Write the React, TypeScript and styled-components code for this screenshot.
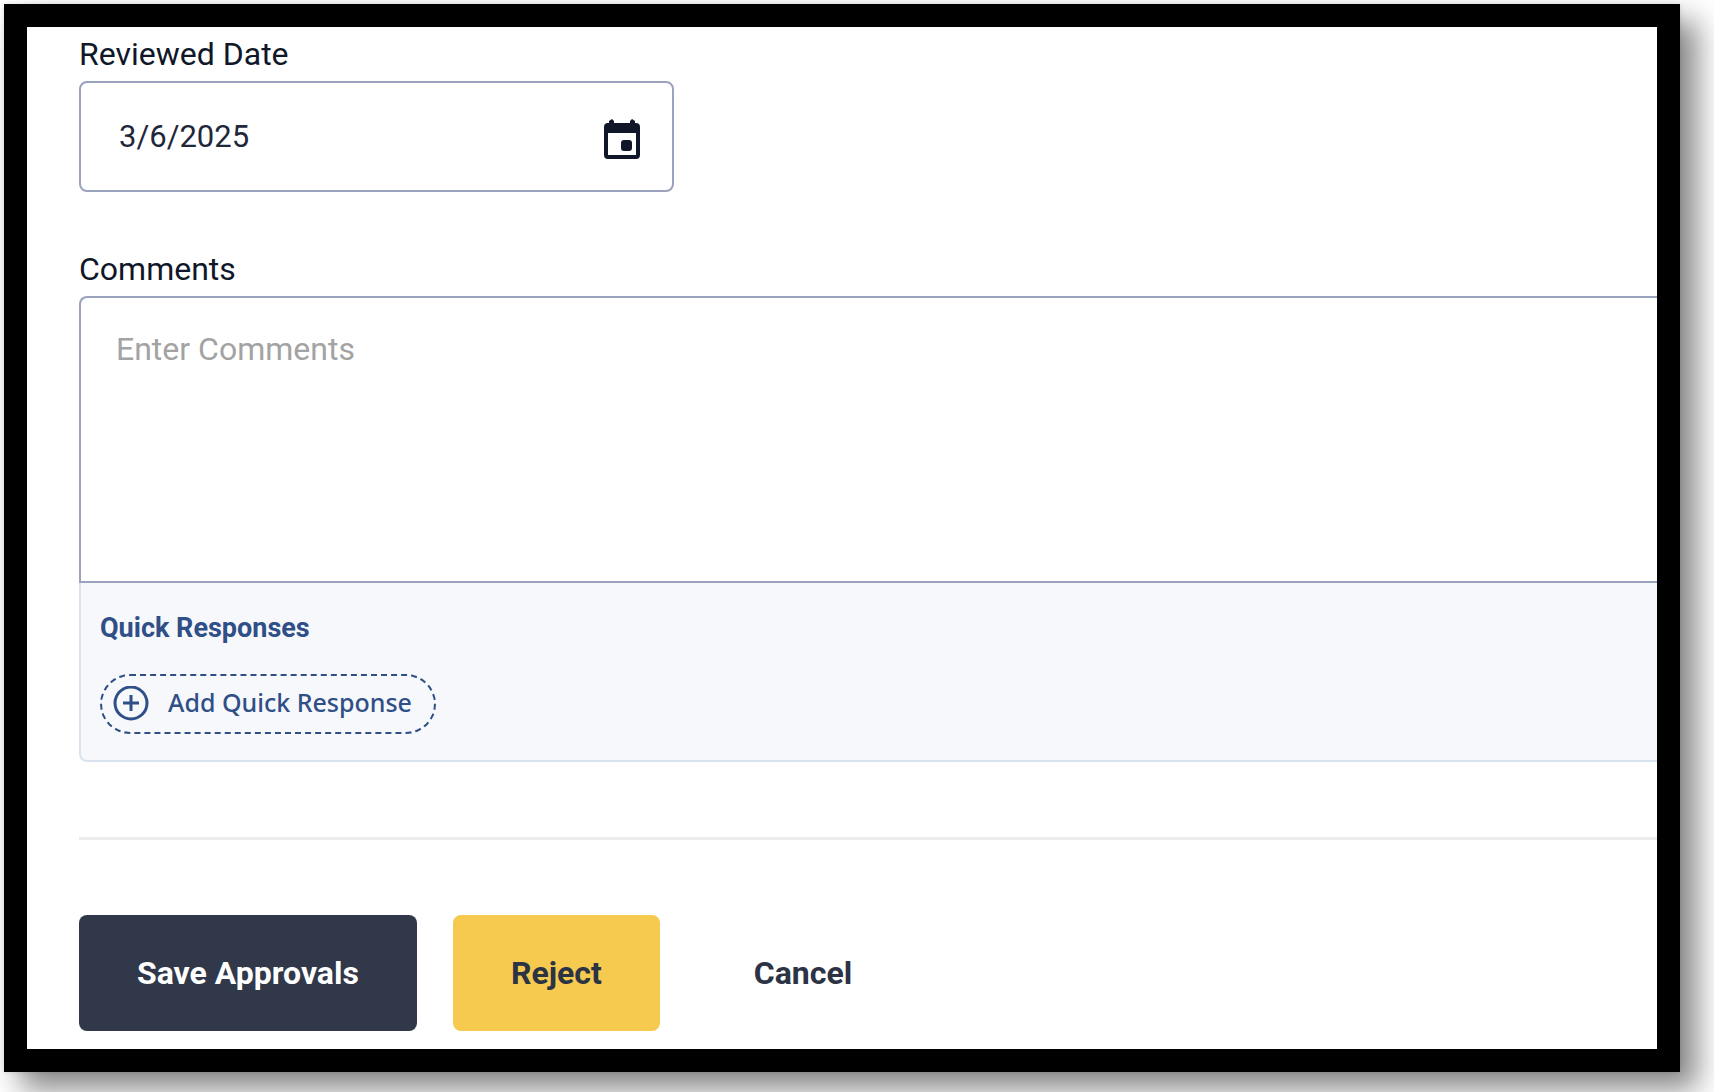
import React, { useState } from "react";
import styled, { createGlobalStyle } from "styled-components";

const GlobalStyle = createGlobalStyle`
  *, *::before, *::after { box-sizing: border-box; }
  body {
    margin: 0;
    background: #ffffff;
    color: #0f1729;
    font-family: Roboto, "Liberation Sans", sans-serif;
  }
  button, input, textarea { font-family: inherit; }
`;

const Page = styled.div`
  padding: 4px 34px 20px 4px;
  overflow: hidden;
`;

const Frame = styled.main`
  border: 23px solid #000000;
  background: #ffffff;
  box-shadow: 17px 17px 28px rgba(0, 0, 0, 0.48), 0 0 5px rgba(0, 0, 0, 0.12);
`;

const Form = styled.form`
  display: flex;
  flex-direction: column;
  padding: 7px 0 18px 52px;
`;

const Field = styled.div`
  display: flex;
  flex-direction: column;
  gap: 7px;
`;

const Label = styled.label`
  align-self: flex-start;
  font-size: 32px;
  line-height: 40px;
`;

const DateBox = styled.div`
  display: flex;
  align-items: center;
  width: 595px;
  height: 111px;
  margin-bottom: 57px;
  padding: 0 31px 0 38px;
  border: 2px solid #9ba2bd;
  border-radius: 8px;
`;

const DateInput = styled.input`
  flex: 1;
  min-width: 0;
  padding: 0;
  border: 0;
  outline: 0;
  background: transparent;
  color: #1f273b;
  font-size: 31px;
  line-height: 40px;
`;

const CalendarButton = styled.button`
  display: flex;
  padding: 4px 0 0;
  border: 0;
  background: transparent;
  color: #0f1729;
`;

const CommentsInput = styled.textarea`
  display: block;
  width: 100%;
  height: 287px;
  padding: 31px 35px;
  border: 2px solid #9ba2bd;
  border-right: 0;
  border-radius: 8px 0 0 0;
  outline: 0;
  resize: none;
  background: #ffffff;
  color: #0f1729;
  font-size: 32px;
  line-height: 40px;

  &::placeholder { color: #a3a3a3; opacity: 1; }
`;

const QuickPanel = styled.section`
  display: flex;
  flex-direction: column;
  align-items: flex-start;
  gap: 28px;
  padding: 27px 19px 26px;
  border: 2px solid #d9e2ef;
  border-width: 0 0 2px 2px;
  border-radius: 0 0 0 8px;
  background: #f6f8fc;
`;

const QuickTitle = styled.h2`
  margin: 0;
  color: #2f4f86;
  font-size: 27px;
  font-weight: 700;
  line-height: 36px;
`;

const AddButton = styled.button`
  display: flex;
  align-items: center;
  gap: 19px;
  height: 60px;
  padding: 0 22px 0 11px;
  border: 2px dashed #2f4f86;
  border-radius: 30px;
  background: transparent;
  color: #2f4f86;
  font-family: "Noto Sans", "Open Sans", sans-serif;
  font-size: 25px;
  font-weight: 500;
  line-height: 36px;
`;

const AddLabel = styled.span`
  padding-bottom: 5px;
`;

const Divider = styled.hr`
  width: 100%;
  height: 3px;
  margin: 75px 0;
  border: 0;
  background: #ececec;
`;

const Actions = styled.div`
  display: flex;
  gap: 36px;
`;

const ActionButton = styled.button<{ $tone: "dark" | "gold" | "plain" }>`
  height: 116px;
  padding: 0 58px;
  border: 0;
  border-radius: 8px;
  background: ${({ $tone }) =>
    $tone === "dark" ? "#303849" : $tone === "gold" ? "#f6ca4f" : "transparent"};
  color: ${({ $tone }) => ($tone === "dark" ? "#ffffff" : "#2b3345")};
  font-size: 32px;
  font-weight: 700;
  line-height: 40px;
`;

function CalendarIcon() {
  return (
    <svg width="38" height="42" viewBox="0 0 38 42" aria-hidden="true">
      <path
        fill="currentColor"
        fillRule="evenodd"
        d="M6 3l3-2 2 2v2h16V3l2-2 3 2v2h1a4 4 0 0 1 4 4v28a4 4 0 0 1-4 4H5a4 4 0 0 1-4-4V9a4 4 0 0 1 4-4h1zM5 15v22h28V15z"
      />
      <rect x="18" y="22" width="11" height="11" rx="3" fill="currentColor" />
    </svg>
  );
}

function PlusCircleIcon() {
  return (
    <svg width="36" height="36" viewBox="0 0 36 36" fill="none" stroke="currentColor" aria-hidden="true">
      <circle cx="18" cy="17" r="16" strokeWidth="3" />
      <path d="M18 9v16M10 17h16" strokeWidth="3" />
    </svg>
  );
}

export default function App() {
  const [date, setDate] = useState("3/6/2025");
  const [comments, setComments] = useState("");

  return (
    <>
      <GlobalStyle />
      <Page>
        <Frame>
          <Form onSubmit={(e) => e.preventDefault()}>
            <Field>
              <Label htmlFor="reviewed-date">Reviewed Date</Label>
              <DateBox>
                <DateInput
                  id="reviewed-date"
                  type="text"
                  value={date}
                  onChange={(e) => setDate(e.target.value)}
                />
                <CalendarButton type="button" aria-label="Choose date">
                  <CalendarIcon />
                </CalendarButton>
              </DateBox>
            </Field>
            <Field>
              <Label htmlFor="comments">Comments</Label>
              <CommentsInput
                id="comments"
                placeholder="Enter Comments"
                value={comments}
                onChange={(e) => setComments(e.target.value)}
              />
            </Field>
            <QuickPanel>
              <QuickTitle>Quick Responses</QuickTitle>
              <AddButton type="button">
                <PlusCircleIcon />
                <AddLabel>Add Quick Response</AddLabel>
              </AddButton>
            </QuickPanel>
            <Divider />
            <Actions>
              <ActionButton type="submit" $tone="dark">Save Approvals</ActionButton>
              <ActionButton type="button" $tone="gold">Reject</ActionButton>
              <ActionButton type="button" $tone="plain">Cancel</ActionButton>
            </Actions>
          </Form>
        </Frame>
      </Page>
    </>
  );
}
